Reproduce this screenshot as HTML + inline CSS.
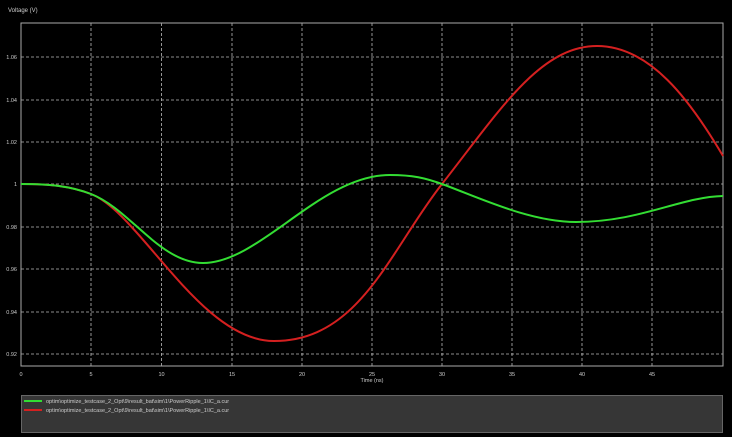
<!DOCTYPE html>
<html><head><meta charset="utf-8"><style>
html,body{margin:0;padding:0;background:#000;width:732px;height:437px;overflow:hidden;font-family:"Liberation Sans",sans-serif}
</style></head><body>
<svg width="732" height="437" xmlns="http://www.w3.org/2000/svg" font-family="Liberation Sans, sans-serif">
<rect width="732" height="437" fill="#000"/>
<text x="8" y="12" fill="#ccc" font-size="6">Voltage (V)</text>
<g stroke="#bbb" stroke-width="0.8" stroke-dasharray="3,2" fill="none">
<path d="M91,23V366M161.5,23V366M232,23V366M302,23V366M372,23V366M442,23V366M512,23V366M582,23V366M652,23V366"/>
<path d="M21,57H723M21,100H723M21,142H723M21,184H723M21,227H723M21,269H723M21,312H723M21,354H723"/>
</g>
<rect x="21" y="23" width="702" height="343" fill="none" stroke="#aaa" stroke-width="1"/>
<g fill="#ccc" font-size="5.5" text-anchor="end">
<text x="17" y="59">1.06</text><text x="17" y="102">1.04</text><text x="17" y="144">1.02</text><text x="17" y="186">1</text><text x="17" y="229">0.98</text><text x="17" y="271">0.96</text><text x="17" y="314">0.94</text><text x="17" y="356">0.92</text>
</g>
<g fill="#ccc" font-size="5.5" text-anchor="middle">
<text x="21" y="376">0</text><text x="91" y="376">5</text><text x="161.5" y="376">10</text><text x="232" y="376">15</text><text x="302" y="376">20</text><text x="372" y="376">25</text><text x="442" y="376">30</text><text x="512" y="376">35</text><text x="582" y="376">40</text><text x="652" y="376">45</text>
<text x="372" y="382">Time (ns)</text>
</g>
<path d="M21,184 C50,184 70,186 91,194 C140,213 200,341 274,341 C360,341 390,250 442,184 C500,110 540,46 597,46 C650,46 690,100 723,156" fill="none" stroke="#d42020" stroke-width="2"/>
<path d="M21,184 C50,184 70,186 91,194 C130,209 160,263 203,263 C260,263 320,175 390,175 C413,175 425,178 442,184 C480,198 530,222 576,222 C640,222 680,197 723,196" fill="none" stroke="#33dd33" stroke-width="2"/>
<rect x="21.5" y="395.5" width="701" height="37" fill="#363636" stroke="#666" stroke-width="1"/>
<line x1="24" y1="401" x2="42" y2="401" stroke="#33dd33" stroke-width="2"/>
<line x1="24" y1="410" x2="42" y2="410" stroke="#d42020" stroke-width="2"/>
<text x="46" y="403" fill="#ccc" font-size="5.5">optim\optimize_testcase_2_Opt\9\result_bat\sim\1\PowerRipple_1\IC_a.cur</text>
<text x="46" y="412" fill="#ccc" font-size="5.5">optim\optimize_testcase_2_Opt\9\result_bat\sim\1\PowerRipple_1\IC_a.cur</text>
</svg>
</body></html>
